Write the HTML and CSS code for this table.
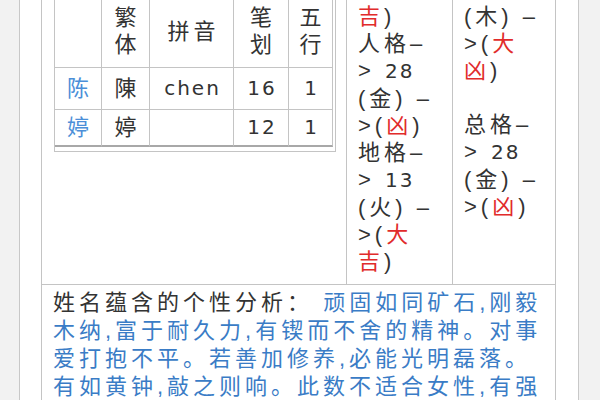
FILE: index.html
```html
<!DOCTYPE html>
<html lang="zh-CN">
<head>
<meta charset="utf-8">
<title>姓名分析</title>
<link rel="stylesheet" href="styles.css">
</head>
<body>
<div class="page">
  <div class="result">
    <div class="cell cell-names">
      <div class="grid-box">
        <table class="names">
          <colgroup>
            <col class="c-a"><col class="c-b"><col class="c-c"><col class="c-d"><col class="c-e">
          </colgroup>
          <tr class="head"><th></th><th>繁<br>体</th><th>拼音</th><th>笔<br>划</th><th>五<br>行</th></tr>
          <tr class="r1"><td class="name">陈</td><td>陳</td><td class="num">chen</td><td class="num">16</td><td class="num">1</td></tr>
          <tr class="r2"><td class="name">婷</td><td>婷</td><td></td><td class="num">12</td><td class="num">1</td></tr>
        </table>
      </div>
    </div>
    <div class="cell cell-ge"><span class="luck">吉</span>)<br>人格–<br>&gt; <span class="num">28</span><br>(金) –<br>&gt;(<span class="luck">凶</span>)<br>地格–<br>&gt; <span class="num">13</span><br>(火) –<br>&gt;(<span class="luck">大</span><br><span class="luck">吉</span>)</div>
    <div class="cell cell-ge">(木) –<br>&gt;(<span class="luck">大</span><br><span class="luck">凶</span>)<br><br>总格–<br>&gt; <span class="num">28</span><br>(金) –<br>&gt;(<span class="luck">凶</span>)</div>
    <div class="cell cell-text"><span class="lead">姓名蕴含的个性分析：</span> <span class="desc">顽固如同矿石,刚毅木纳,富于耐久力,有锲而不舍的精神。对事爱打抱不平。若善加修养,必能光明磊落。有如黄钟,敲之则响。此数不适合女性,有强</span></div>
  </div>
</div>
</body>
</html>
```
FILE: styles.css
```css
* {
  box-sizing: border-box;
}

body {
  margin: 0;
  background: #f2f2f2;
  font-family: "Liberation Sans", "Noto Sans CJK SC", sans-serif;
  font-size: 22px;
  line-height: 27px;
  letter-spacing: 4px;
  color: #333;
}

.page {
  margin-left: 19px;
  width: 560px;
  min-height: 400px;
  background: #fff;
  border-left: 1px solid #c8c8c8;
  border-right: 1px solid #c8c8c8;
  padding: 0 22px 0 21px;
}

.result {
  display: grid;
  grid-template-columns: 304px 105px 102px;
  gap: 1px;
  background: #c4c4c4;
  padding: 0 1px 1px;
}

.cell {
  background: #fff;
}

.cell-names {
  padding-left: 12px;
}

.grid-box {
  width: 282px;
  border: 1px solid #c4c4c4;
  border-top: 0;
  padding: 0 2px 4px 0;
}

.names {
  width: 278px;
  table-layout: fixed;
  border-collapse: separate;
  border-spacing: 0;
}

.c-a { width: 47px; }
.c-b { width: 48px; }
.c-c { width: 84px; }
.c-d { width: 55px; }
.c-e { width: 44px; }

.names th,
.names td {
  padding: 0 0 0 4px;
  text-align: center;
  vertical-align: middle;
  font-weight: normal;
  border-right: 1px solid #c4c4c4;
  border-bottom: 1px solid #c4c4c4;
}

.names .head th {
  height: 68px;
  padding-bottom: 5px;
}

.names .r1 td {
  height: 42px;
}

.names .r2 td {
  height: 37px;
  border-bottom: 2px solid #a8a8a8;
}

.names td.num {
  padding-left: 2px;
}

.num {
  font-family: "DejaVu Sans", sans-serif;
  font-size: 20px;
  letter-spacing: 2px;
}

.name {
  color: #4b8fd8;
}

.cell-ge {
  padding: 3px 11px 9px;
}

.luck {
  color: #e12b2b;
}

.cell-text {
  grid-column: 1 / -1;
  padding: 4px 11px 0;
  line-height: 28px;
  min-height: 130px;
}

.lead {
  color: #333;
}

.desc {
  color: #3a7cc6;
}
```
